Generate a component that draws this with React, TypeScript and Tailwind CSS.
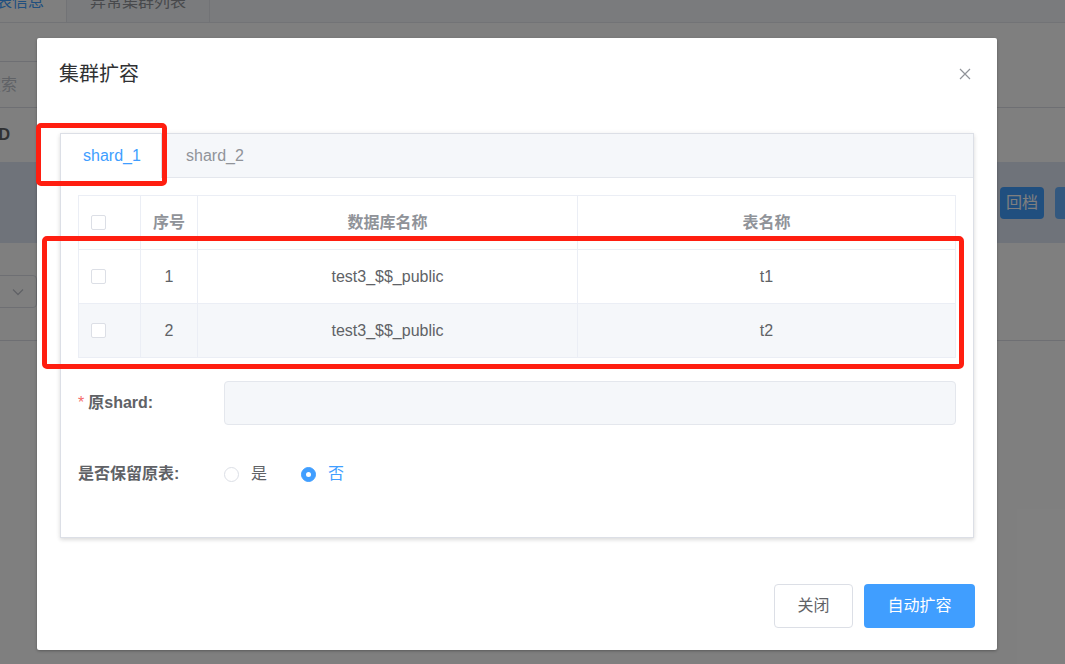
import { Check } from 'lucide-react';

const rows = [
  { no: 1, db: 'test3_$$_public', table: 't1' },
  { no: 2, db: 'test3_$$_public', table: 't2' },
];

function CheckBox() {
  return <span className="block w-[15px] h-[15px] rounded-[2px] border border-[#dcdfe6] bg-white" />;
}

function Radio({ checked, label }: { checked?: boolean; label: string }) {
  return (
    <label className="flex items-center mr-[34px]">
      {checked ? (
        <span className="w-[15px] h-[15px] rounded-full bg-[#409eff] border border-[#409eff] flex items-center justify-center">
          <span className="w-[5px] h-[5px] rounded-full bg-white" />
        </span>
      ) : (
        <span className="w-[15px] h-[15px] rounded-full border border-[#dcdfe6] bg-white" />
      )}
      <span className={`ml-[12px] text-[16px] ${checked ? 'text-[#409eff]' : 'text-[#606266]'}`}>{label}</span>
    </label>
  );
}

export default function App() {
  const cell = "h-[54px] flex items-center justify-center border-r border-b border-[#ebeef5]";

  return (
    <div className="relative w-[1065px] h-[664px] overflow-hidden bg-white font-['Liberation_Sans','Noto_Sans_CJK_SC',sans-serif]">
      {/* page behind the dialog */}
      <div className="flex flex-col">
        <div className="h-[23px] overflow-hidden flex items-end bg-[#f5f7fa] border-b border-[#e4e7ed]">
          <div className="h-[41px] w-[67px] shrink-0 bg-white border-r border-[#e4e7ed] flex items-center justify-end pr-[22px] text-[16px] text-[#409eff] whitespace-nowrap">表信息</div>
          <div className="h-[41px] px-[23px] flex items-center text-[16px] text-[#909399] border-r border-[#e4e7ed] whitespace-nowrap">异常集群列表</div>
        </div>
        <div className="h-[85px] border-b border-[#dcdfe6] flex items-end">
          <div className="-ml-[30px] h-[46px] w-[200px] border border-b-0 border-[#dcdfe6] rounded-t-[4px] flex items-center pl-[14px] text-[16px] text-[#c0c4cc]">搜索</div>
        </div>
        <div className="h-[54px] flex items-center -ml-[6px] text-[16px] font-bold text-[#606266]">ID</div>
        <div className="h-[81px] bg-[#dee6f4] flex items-center justify-end gap-[11px] -mr-[40px]">
          <div className="h-[32px] px-[6px] rounded-[4px] bg-[#409eff] text-white text-[16px] flex items-center">回档</div>
          <div className="h-[32px] w-[50px] rounded-[4px] bg-[#66b1ff]" />
        </div>
        <div className="h-[98px] border-b border-[#dcdfe6] flex items-center">
          <div className="-ml-[60px] h-[33px] w-[97px] border border-[#dcdfe6] rounded-[4px] flex items-center justify-end pr-[12px]">
            <svg width="12" height="8" viewBox="0 0 12 8"><path d="M1 1.5 6 6.5 11 1.5" fill="none" stroke="#c0c4cc" strokeWidth="1.3" /></svg>
          </div>
        </div>
      </div>

      <div className="absolute inset-0 bg-black/50" />

      {/* dialog */}
      <div className="absolute left-[37px] top-[38px] w-[960px] h-[612px] bg-white rounded-[2px] shadow-[0_1px_3px_rgba(0,0,0,0.3)] flex flex-col">
        <div className="h-[72px] shrink-0 flex items-center justify-between pl-[22px] pr-[26px]">
          <span className="text-[20px] text-[#303133]">集群扩容</span>
          <svg width="12" height="12" viewBox="0 0 12 12"><path d="M1 1 11 11M11 1 1 11" stroke="#909399" strokeWidth="1.2" /></svg>
        </div>

        <div className="mt-[23px] ml-[23px] w-[914px] border border-[#dcdfe6] shadow-[0_2px_4px_rgba(0,0,0,0.12),0_0_6px_rgba(0,0,0,0.04)]">
          <div className="h-[44px] bg-[#f5f7fa] border-b border-[#e4e7ed] flex">
            <div className="h-[44px] w-[101px] bg-white border-r border-[#dcdfe6] flex items-center pl-[22px] text-[16px] text-[#409eff]">shard_1</div>
            <div className="h-[43px] flex items-center pl-[24px] text-[16px] text-[#909399]">shard_2</div>
          </div>

          <div className="pt-[17px] px-[17px] pb-[41px]">
            <div className="border-l border-t border-[#ebeef5] text-[16px]">
              <div className="grid grid-cols-[62px_57px_380px_1fr] font-bold text-[#909399]">
                <div className={`${cell} !justify-start pl-[12px]`}><CheckBox /></div>
                <div className={cell}>序号</div>
                <div className={cell}>数据库名称</div>
                <div className={cell}>表名称</div>
              </div>
              {rows.map((r, i) => (
                <div key={r.no} className={`grid grid-cols-[62px_57px_380px_1fr] text-[#606266] ${i % 2 ? 'bg-[#f5f7fa]' : 'bg-white'}`}>
                  <div className={`${cell} !justify-start pl-[12px]`}><CheckBox /></div>
                  <div className={cell}>{r.no}</div>
                  <div className={cell}>{r.db}</div>
                  <div className={cell}>{r.table}</div>
                </div>
              ))}
            </div>

            <div className="mt-[23px] h-[44px] flex items-center">
              <div className="w-[146px] shrink-0 text-[16px] font-bold text-[#606266]">
                <span className="text-[#f56c6c] font-normal mr-[4px]">*</span>原shard:
              </div>
              <div className="flex-1 h-[44px] bg-[#f5f7fa] border border-[#e4e7ed] rounded-[4px]" />
            </div>

            <div className="mt-[27px] h-[44px] flex items-center">
              <div className="w-[146px] shrink-0 text-[16px] font-bold text-[#606266]">是否保留原表:</div>
              <Radio label="是" />
              <Radio label="否" checked />
            </div>
          </div>
        </div>

        <div className="mt-[46px] pr-[22px] flex justify-end gap-[11px]">
          <button className="h-[44px] w-[79px] rounded-[4px] border border-[#dcdfe6] bg-white text-[16px] text-[#606266]">关闭</button>
          <button className="h-[44px] w-[111px] rounded-[4px] bg-[#409eff] text-[16px] text-white">自动扩容</button>
        </div>
      </div>

      {/* red annotation boxes */}
      <div className="absolute left-[36px] top-[123px] w-[131px] h-[63px] border-[5px] border-[#ff1e10] rounded-[5px]" />
      <div className="absolute left-[42px] top-[236px] w-[922px] h-[133px] border-[5px] border-[#ff1e10] rounded-[5px]" />
      <span className="hidden"><Check size={1} /></span>
    </div>
  );
}
